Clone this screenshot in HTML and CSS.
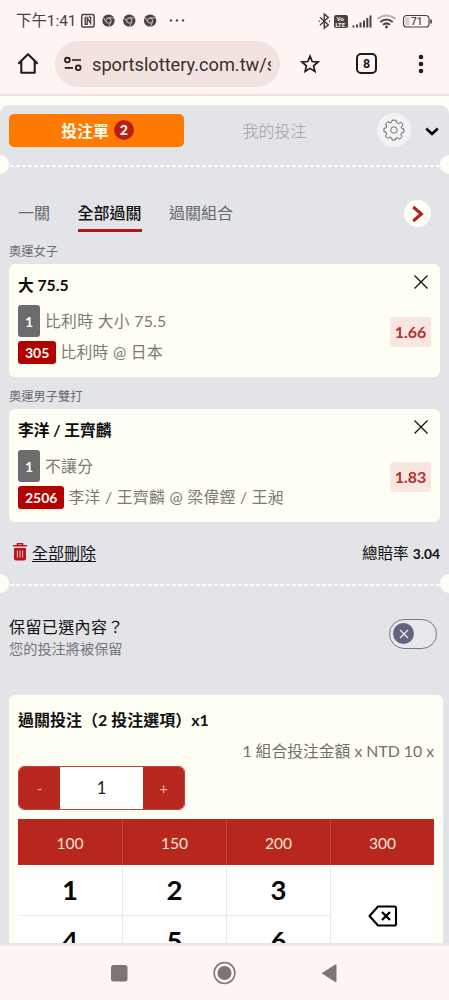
FILE: index.html
```
<!DOCTYPE html>
<html lang="zh-Hant">
<head>
<meta charset="utf-8">
<title>投注單</title>
<link rel="stylesheet" href="styles.css">
</head>
<body>
<div class="phone">
  <header class="status">
    <span class="clock">下午1:41</span>
    <svg class="status-left" width="110" height="18" viewBox="0 0 110 18">
      <rect x="1.7" y="2.6" width="12.4" height="12.4" rx="1.5" fill="none" stroke="#4a4340" stroke-width="1.5"/>
      <path d="M5.2 4.8V12.4H7.2V6L10.6 11.4V5.2H8.6" fill="none" stroke="#4a4340" stroke-width="1.4"/>
      <g id="chrome">
        <circle cx="28.5" cy="8.6" r="6.2" fill="#4a4340"/>
        <circle cx="28.5" cy="8.6" r="2.6" fill="#4a4340" stroke="#cfc7c4" stroke-width="1"/>
        <path d="M28.5 5.8H34M26 9.8L23.3 5.3M31 10.1L28.6 14.7" stroke="#cfc7c4" stroke-width=".9"/>
      </g>
      <use href="#chrome" x="20.8"/>
      <use href="#chrome" x="41.6"/>
      <g fill="#4a4340"><circle cx="91" cy="8.4" r="1.2"/><circle cx="97" cy="8.4" r="1.2"/><circle cx="103" cy="8.4" r="1.2"/></g>
    </svg>
    <svg class="status-right" width="116" height="18" viewBox="0 0 116 18">
      <path d="M2 5.2L10.3 13L6.3 16.2V2L10.3 5.4L2 13.2" fill="none" stroke="#4a4340" stroke-width="1.5"/>
      <path d="M.8 9.2h1M11 9.2h1" stroke="#4a4340" stroke-width="1.5"/>
      <rect x="16" y="3" width="14" height="13" rx="2" fill="#4a4340"/>
      <text class="volte" x="18.8" y="8.8">Vo</text><text class="volte" x="17.6" y="15">LTE</text>
      <path d="M35.5 15.5v-2M39 15.5v-3M42.5 15.5v-5M46 15.5V8.5M49.3 15.5V6M52.5 15.5V3.5" stroke="#4a4340" stroke-width="2"/>
      <g fill="none" stroke-width="2"><path d="M59.5 7q9-7 18 0" stroke="#bdb4b1"/><path d="M62.3 10q6.2-5 12.4 0" stroke="#4a4340"/><path d="M65 12.8q3.5-2.8 7 0" stroke="#4a4340"/></g>
      <circle cx="68.5" cy="15" r="1.4" fill="#4a4340"/>
      <rect x="85.5" y="3.5" width="25.5" height="11.5" rx="3.3" fill="none" stroke="#4a4340" stroke-width="1.2"/>
      <path d="M88 5h3.5v8.5H88q-1-.2-1-2V7q0-1.8 1-2z" fill="#d9d1ce"/>
      <path d="M113 7.5v4" stroke="#4a4340" stroke-width="1.7"/>
      <text class="battery" x="93" y="12.9">71</text>
    </svg>
  </header>

  <nav class="browser">
    <svg class="home" width="22" height="24" viewBox="0 0 22 24"><path d="M1.3 12.8L11 3.3l9.7 9.5M4.3 10.5V21.7H17.7V10.5" fill="none" stroke="#201a19" stroke-width="2.1" stroke-linejoin="round"/></svg>
    <div class="url">
      <svg width="18" height="16" viewBox="0 0 18 16"><g fill="none" stroke="#201a19" stroke-width="1.7"><circle cx="3.4" cy="4" r="2.4"/><circle cx="14.2" cy="11.8" r="2.4"/><path d="M8 4h9M.8 11.8H9"/></g></svg>
      <span class="address">sportslottery.com.tw/s</span>
    </div>
    <svg class="star" width="20" height="20" viewBox="0 0 20 20"><path d="M10 2.2l2.2 5.3 5.8.5-4.4 3.8 1.3 5.6L10 14.4l-4.9 3 1.3-5.6L2 8l5.8-.5z" fill="none" stroke="#201a19" stroke-width="1.7"/></svg>
    <span class="tab-count">8</span>
    <svg class="more" width="6" height="20" viewBox="0 0 6 20" fill="#201a19"><circle cx="3" cy="3" r="2.3"/><circle cx="3" cy="10" r="2.3"/><circle cx="3" cy="17" r="2.3"/></svg>
  </nav>

  <main class="page">
    <div class="slip">
      <div class="top-tabs">
        <div class="tab-slip">投注單<b class="count">2</b></div>
        <div class="tab-mine">我的投注</div>
        <div class="gear"><svg width="22" height="22" viewBox="-11 -11 22 22"><path d="M-2-9.8h4l.6 2.5 2 .9L6.9-7.8 9-5.2 7.2-2.8 7.8-1.4 10-1v3.2l-2.4.5-.8 1.8 1.3 2.2-2.4 2.3-2.3-1.3-1.6.6L1.4 10h-3.2l-.6-2.2-1.8-.7-2.2 1.3-2.3-2.3L-7.3 4-8 2.1l-2.1-.5v-3.2l2.2-.6.7-1.8L-8.5-6-6-8.3l2.1 1.2 1.5-.6z" fill="none" stroke="#555" stroke-width=".9" stroke-linejoin="round"/><circle r="3.2" fill="none" stroke="#666" stroke-width=".9"/></svg></div>
        <svg class="chevron" width="14" height="9" viewBox="0 0 14 9"><path d="M1.2 1.5L7 7l5.8-5.5" fill="none" stroke="#000" stroke-width="2.5"/></svg>
      </div>
      <div class="perforation"></div>
      <div class="modes">
        <span>一關</span><span class="active">全部過關</span><span>過關組合</span>
        <div class="next"><svg width="14" height="18" viewBox="0 0 14 18"><path d="M2.2 2L10.4 9l-8.2 7" fill="none" stroke="#ad1f20" stroke-width="3"/></svg></div>
      </div>

      <h3 class="league">奧運女子</h3>
      <section class="bet">
        <div class="bet-info">
          <h4>大 75.5</h4>
          <div class="line"><b class="no">1</b><span>比利時 大小 75.5</span></div>
          <div class="line match"><b class="code">305</b><span>比利時 @ 日本</span></div>
        </div>
        <div class="bet-side"><svg class="close" width="16" height="16" viewBox="0 0 16 16"><path d="M1.5 1.5l13 13M14.5 1.5l-13 13" stroke="#111" stroke-width="1.3"/></svg><b class="odds">1.66</b></div>
      </section>

      <h3 class="league">奧運男子雙打</h3>
      <section class="bet">
        <div class="bet-info">
          <h4>李洋 / 王齊麟</h4>
          <div class="line"><b class="no">1</b><span>不讓分</span></div>
          <div class="line match"><b class="code">2506</b><span>李洋 / 王齊麟 @ 梁偉鏗 / 王昶</span></div>
        </div>
        <div class="bet-side"><svg class="close" width="16" height="16" viewBox="0 0 16 16"><path d="M1.5 1.5l13 13M14.5 1.5l-13 13" stroke="#111" stroke-width="1.3"/></svg><b class="odds">1.83</b></div>
      </section>

      <div class="summary">
        <svg width="14" height="18" viewBox="0 0 14 18"><path d="M0 2.8h14M4.5 2.5V.8h5v1.7" fill="none" stroke="#b9151b" stroke-width="1.6"/><path d="M1 5h12v10.5q0 2-2 2H3q-2 0-2-2z" fill="#b9151b"/><path d="M4.4 7.5v7M7 7.5v7M9.6 7.5v7" stroke="#eeb9b9" stroke-width="1.1"/></svg>
        <a class="clear">全部刪除</a>
        <span class="total">總賠率 <b>3.04</b></span>
      </div>
      <div class="perforation"></div>

      <div class="keep">
        <div><p>保留已選內容？</p><small>您的投注將被保留</small></div>
        <div class="toggle"><span class="knob"><svg width="10" height="10" viewBox="0 0 10 10"><path d="M1 1l8 8M9 1L1 9" stroke="#eceef6" stroke-width="1.2"/></svg></span></div>
      </div>

      <section class="stake">
        <h4>過關投注（2 投注選項）x1</h4>
        <p class="formula">1 組合投注金額 x NTD 10 x</p>
        <div class="stepper"><span class="step">-</span><span class="value">1</span><span class="step">+</span></div>
        <div class="keypad">
          <span class="quick">100</span><span class="quick">150</span><span class="quick">200</span><span class="quick">300</span>
          <span>1</span><span>2</span><span>3</span>
          <span class="erase"><svg width="30" height="22" viewBox="0 0 30 22"><path d="M10 1.5H26.5q1.5 0 1.5 1.5v16q0 1.5-1.5 1.5H10L1.5 11z" fill="none" stroke="#000" stroke-width="2.1" stroke-linejoin="round"/><path d="M14 7l8 8M22 7l-8 8" stroke="#000" stroke-width="2.4"/></svg></span>
          <span>4</span><span>5</span><span>6</span>
        </div>
      </section>
    </div>
  </main>

  <footer class="navbar">
    <svg width="230" height="24" viewBox="0 0 230 24"><g fill="#7b7675"><rect x="2" y="4" width="16.5" height="16.5" rx="2.5"/><circle cx="115.5" cy="12" r="7"/><path d="M212.6 12.2L226.3 3.6q1.2-.5 1.2.7v16q0 1.2-1.2.7z"/></g><circle cx="115.5" cy="12" r="10.4" fill="none" stroke="#7b7675" stroke-width="1.5"/></svg>
  </footer>
</div>
</body>
</html>
```
FILE: styles.css
```
* { box-sizing: border-box; }
body { margin: 0; background: #fff5f3; font-family: Lato, "Noto Sans CJK TC", sans-serif; }
h3, h4, p { margin: 0; }
svg { display: block; flex: none; }
.phone { width: 449px; height: 1000px; display: flex; flex-direction: column; overflow: hidden; }

.status { height: 41px; display: flex; align-items: center; padding: 0 15px 0 16px; color: #4a4340; }
.clock { width: 64px; font: 400 15.4px/20px Roboto, "Noto Sans CJK TC", sans-serif; white-space: nowrap; }
.status-right { margin-left: auto; }
.volte { font: 700 5.8px Roboto, sans-serif; fill: #fff5f3; }
.battery { font: 500 10px Roboto, sans-serif; fill: #4a4340; }

.browser { height: 55px; display: flex; align-items: flex-start; border-bottom: 2px solid #efe3e1; padding-left: 17px; }
.home { margin-top: 10px; }
.url { width: 225px; height: 46px; margin-left: 16px; padding: 0 9px 0 9px; display: flex; align-items: center; gap: 10px; border-radius: 23px; background: #f2e3e0; }
.address { flex: 1; margin-top: 1px; overflow: hidden; white-space: nowrap; font: 400 18.2px/24px Roboto, sans-serif; color: #362f2d; }
.star { width: 20px; margin: 13px 0 0 20px; }
.tab-count { width: 21px; height: 21px; margin: 12px 0 0 36px; border: 2.2px solid #201a19; border-radius: 5px; font: 700 12.5px/17px Roboto, sans-serif; text-align: center; color: #201a19; }
.more { margin: 13px 0 0 41px; }

.page { height: 847px; padding-top: 9px; background: #fffef4; overflow: hidden; }
.slip { height: 838px; background: #e3e4e7; border-radius: 9px 9px 0 0; }

.top-tabs { height: 50px; padding: 9px 10px 0 9px; display: flex; align-items: flex-start; }
.tab-slip { width: 175px; height: 33px; padding: 0 0 1px 2px; display: flex; align-items: center; justify-content: center; gap: 5px; border-radius: 5px; background: #ff7b00; color: #fffdf0; font-weight: 700; font-size: 15.8px; }
.count { width: 20px; height: 20px; border-radius: 50%; background: #bd1c16; font-size: 14px; line-height: 20px; text-align: center; }
.tab-mine { width: 181px; height: 33px; line-height: 33px; text-align: center; font-size: 16px; font-weight: 300; color: #a0a1a4; }
.gear { width: 34px; height: 34px; margin: -1px 0 0 12px; display: grid; place-items: center; border-radius: 50%; background: #f2f3f5; }
.chevron { margin: 13px 0 0 14px; }

.perforation { height: 20px; display: flex; align-items: center; justify-content: space-between; background: linear-gradient(90deg, #fdfdfb 67%, transparent 67%) 10px 10px / 6px 2px repeat-x; }
.perforation::before, .perforation::after { content: ""; width: 9px; height: 19px; margin-top: -1px; background: #fffef4; }
.perforation::before { border-radius: 0 10px 10px 0; }
.perforation::after { border-radius: 10px 0 0 10px; }

.modes { height: 64px; padding: 22px 18px 0 18px; display: flex; align-items: flex-start; font-size: 16px; line-height: 31px; color: #66676a; }
.modes span { height: 35px; margin-right: 27.5px; }
.modes .active { color: #111; font-weight: 500; border-bottom: 3px solid #b4131b; }
.next { width: 27px; height: 27px; margin: 3px 0 0 auto; display: grid; place-items: center; border-radius: 50%; background: #fffef6; }

.league { height: 25px; padding: 3px 9px 0; font-size: 12.25px; line-height: 19px; font-weight: 400; color: #6b6c6e; }
.bet { height: 113px; margin: 0 9px 7px; padding: 11px 9px; display: flex; border-radius: 6px; background: #fffef5; }
.bet-info { flex: 1; }
.bet h4 { height: 30px; font-size: 15.7px; line-height: 20px; color: #0b0b0b; }
.line { height: 32px; display: flex; align-items: center; gap: 5px; font-size: 15.8px; color: #7b7a75; font-weight: 400; letter-spacing: .3px; white-space: nowrap; }
.line span { margin-top: -2px; }
.match { height: 31px; gap: 4px; }
.no, .code { display: grid; place-items: center; color: #fffef5; font-size: 14px; font-weight: 700; letter-spacing: 0; border-radius: 3px; }
.no { width: 22px; height: 32px; background: #6c6c6c; }
.code { height: 23px; padding: 0 7px; background: #b30000; }
.bet-side { display: flex; flex-direction: column; align-items: flex-end; }
.close { margin: -1px 2px 0 0; }
.odds { width: 41px; height: 30px; margin-top: 27px; border-radius: 4px; background: #f8e6e1; color: #b62f2d; font-size: 16px; line-height: 30px; text-align: center; }

.summary { height: 45px; padding: 1px 9px 0 13px; display: flex; align-items: center; gap: 5px; font-size: 16px; color: #111; }
.clear { text-decoration: underline; text-underline-offset: 2px; }
.total { margin-left: auto; font-size: 15.6px; }
.total b { font-size: 13.8px; }

.keep { height: 101px; padding: 22px 12px 0 9px; display: flex; justify-content: space-between; align-items: flex-start; }
.keep p { font-size: 16px; line-height: 22px; letter-spacing: .4px; color: #111; }
.keep small { display: block; font-size: 14.2px; line-height: 21px; color: #747579; }
.toggle { width: 48px; height: 30px; margin-top: 3px; padding: 3px; border: 1px solid #77788c; border-radius: 15px; background: #e6e8ed; }
.knob { width: 21px; height: 21px; display: grid; place-items: center; border-radius: 50%; background: #626383; }

.stake { height: 248px; margin: 0 6px 0 9px; padding: 13px 9px 0; border-radius: 6px 6px 0 0; background: #fffef5; overflow: hidden; }
.stake h4 { font-size: 16px; line-height: 24px; color: #111; }
.formula { height: 34px; padding-top: 7px; font-size: 15.8px; line-height: 24px; text-align: right; color: #72706a; }
.stepper { width: 167px; height: 44px; display: grid; grid-template-columns: 41px 1fr 41px; border: 1px solid #c0453d; border-radius: 6px; overflow: hidden; background: #fff; text-align: center; line-height: 42px; font-size: 16.5px; color: #222; }
.step { background: #b7271d; color: #f1b5a5; font-size: 15px; }
.keypad { margin-top: 9px; display: grid; grid-template-columns: 105px 104px 104px 103px; grid-template-rows: 46px 50.5px 50.5px; background: #fff; }
.keypad span { border-right: 1px solid #eee9e9; border-bottom: 1px solid #eee9e9; text-align: center; font-size: 27.5px; font-weight: 700; line-height: 50px; color: #050505; }
.keypad .quick { background: #b7271d; border-color: #c5483d; border-bottom: 0; color: #fae5d5; font-size: 15.6px; font-weight: 400; line-height: 49px; }
.keypad .quick:nth-child(4) { border-right: 0; }
.keypad .erase { grid-row: span 2; display: grid; place-items: center; border: 0; }

.navbar { height: 57px; border-top: 3px solid #efe6e3; display: flex; align-items: center; padding-left: 109px; background: #fff5f3; }
```
